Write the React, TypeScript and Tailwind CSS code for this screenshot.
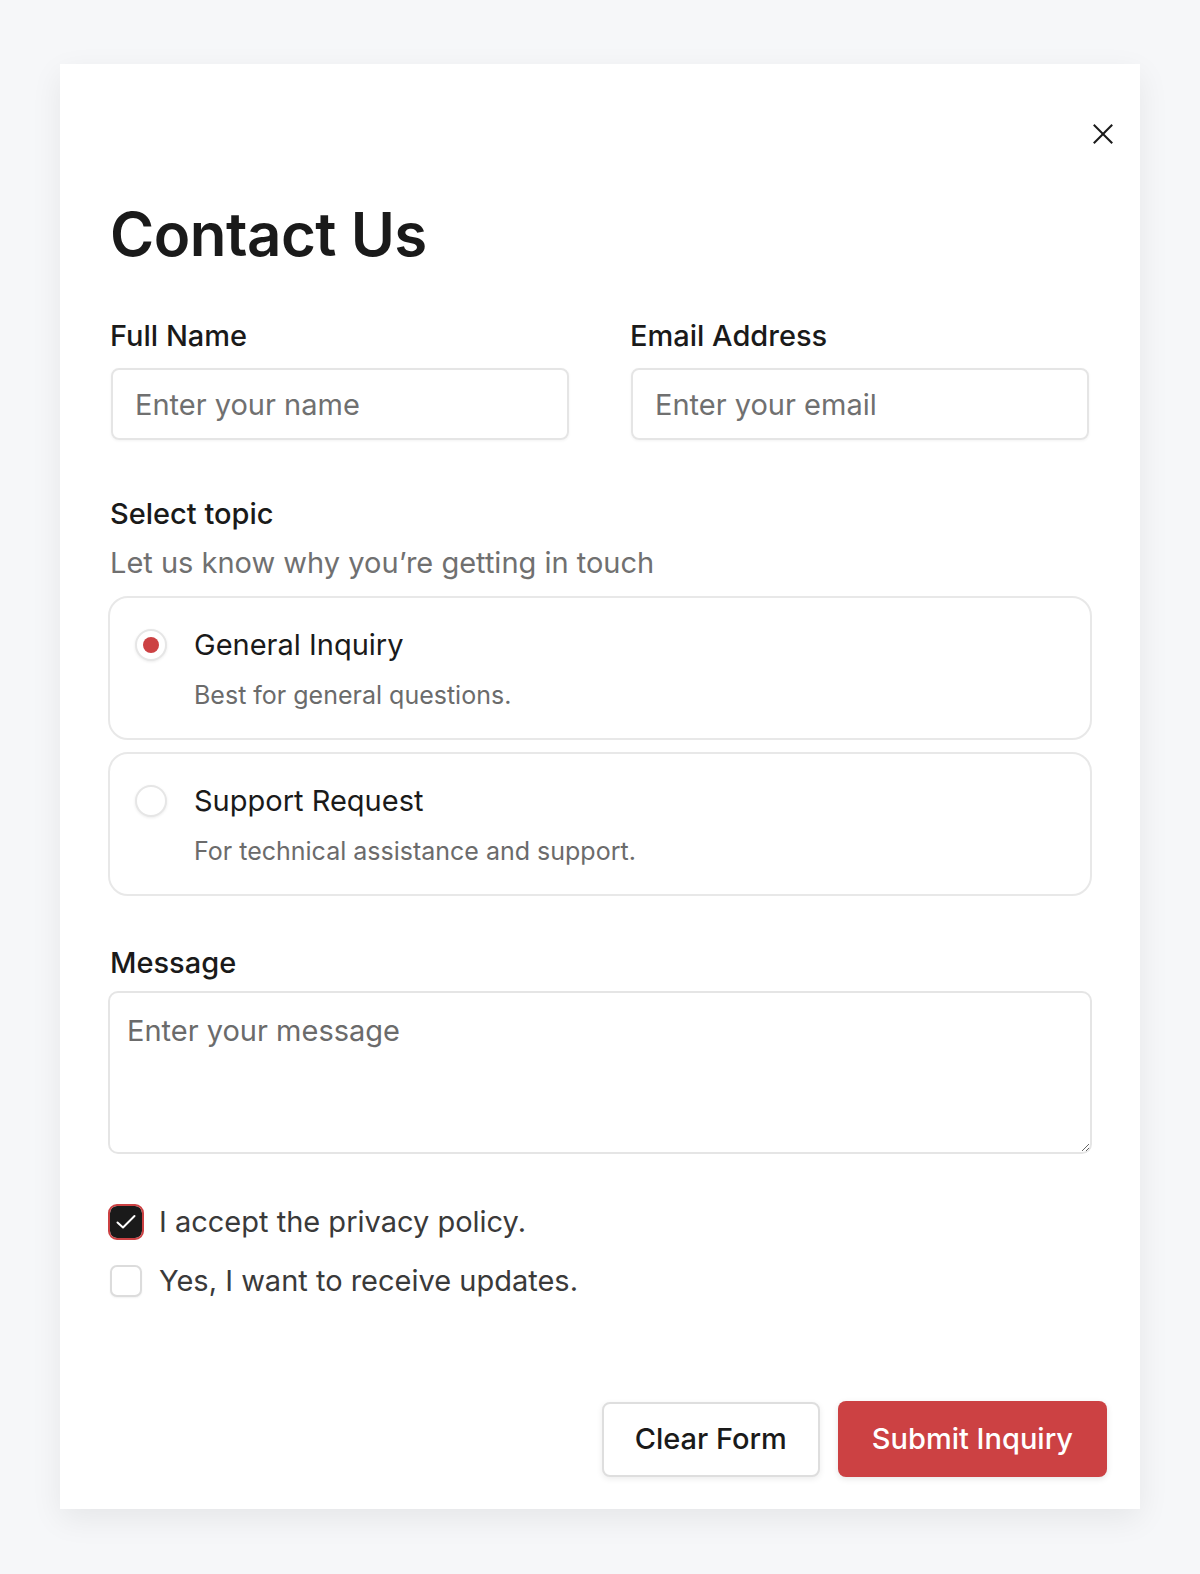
import React, { useState } from 'react';

// Close icon drawn as two strokes
const CloseIcon: React.FC = () => (
  <svg width="20" height="20" viewBox="0 0 20 20" fill="none" stroke="#1a1a1a" strokeWidth="2" strokeLinecap="square">
    <path d="M1.5 1.5 L18.5 18.5" />
    <path d="M18.5 1.5 L1.5 18.5" />
  </svg>
);

const CheckIcon: React.FC = () => (
  <svg width="24" height="24" viewBox="0 0 24 24" fill="none" stroke="#ffffff" strokeWidth="2" strokeLinecap="round" strokeLinejoin="round">
    <path d="M3.5 12.5 L9 17.5 L20.5 6" />
  </svg>
);

const topics = [
  { id: 'general', title: 'General Inquiry', desc: 'Best for general questions.' },
  { id: 'support', title: 'Support Request', desc: 'For technical assistance and support.' },
];

const Checkbox: React.FC<{ checked: boolean; onToggle: () => void; label: string }> = ({ checked, onToggle, label }) => (
  <label className="flex h-[36px] cursor-pointer items-center gap-[15px]" onClick={onToggle}>
    <span className="flex h-[36px] w-[36px] items-center justify-center">
      {checked ? (
        <span className="flex h-[32px] w-[32px] items-center justify-center rounded-[7px] bg-[#1a1a1a] outline-2 outline-[#cc4143]">
          <CheckIcon />
        </span>
      ) : (
        <span className="h-[32px] w-[32px] rounded-[7px] border-2 border-[#dcdcdc] bg-white shadow-[0_1px_2px_rgba(0,0,0,0.06)]" />
      )}
    </span>
    <span className="text-[29px] leading-[36px] text-[#3a3a3a]">{label}</span>
  </label>
);

const App: React.FC = () => {
  const [topic, setTopic] = useState('general');
  const [privacy, setPrivacy] = useState(true);
  const [updates, setUpdates] = useState(false);

  return (
    <div className="min-h-screen bg-[#f6f7f9] px-[60px] pt-[64px] pb-[65px] font-['Inter',sans-serif] text-[#1a1a1a]">
      <div className="relative bg-white shadow-[0_10px_30px_rgba(0,0,0,0.07)]">
        <button className="absolute top-[50px] right-[17px] flex h-[40px] w-[40px] items-center justify-center">
          <CloseIcon />
        </button>

        <div className="px-[48px] pt-[140px]">
          <h1 className="pl-[2px] text-[60px] leading-[60px] font-semibold tracking-[-0.5px]">Contact Us</h1>

          <div className="mt-[56px] grid grid-cols-2 gap-x-[56px]">
            <div>
              <label className="block pl-[2px] text-[29px] leading-[32px] font-medium">Full Name</label>
              <input
                type="text"
                placeholder="Enter your name"
                className="mx-[3px] mt-[16px] block h-[72px] w-[calc(100%-6px)] rounded-[8px] border-2 border-[#e5e5e5] px-[22px] text-[29px] shadow-[0_1px_3px_rgba(0,0,0,0.05)] outline-none placeholder:text-[#707070]"
              />
            </div>
            <div>
              <label className="block pl-[2px] text-[29px] leading-[32px] font-medium">Email Address</label>
              <input
                type="email"
                placeholder="Enter your email"
                className="mx-[3px] mt-[16px] block h-[72px] w-[calc(100%-6px)] rounded-[8px] border-2 border-[#e5e5e5] px-[22px] text-[29px] shadow-[0_1px_3px_rgba(0,0,0,0.05)] outline-none placeholder:text-[#707070]"
              />
            </div>
          </div>

          <div className="mt-[58px] pl-[2px]">
            <p className="text-[29px] leading-[32px] font-medium">Select topic</p>
            <p className="mt-[15px] text-[29px] leading-[36px] text-[#707070]">Let us know why you’re getting in touch</p>
          </div>

          <div className="mt-[15px] flex flex-col gap-[12px]">
            {topics.map((t) => (
              <div
                key={t.id}
                onClick={() => setTopic(t.id)}
                className="cursor-pointer rounded-[20px] border-2 border-[#e8e8e8] pt-[29px] pb-[27px] pl-[25px] pr-[24px]"
              >
                <div className="flex items-center gap-[27px]">
                  <span className="flex h-[32px] w-[32px] items-center justify-center rounded-full border-2 border-[#e6e6e6] bg-white shadow-[0_1px_3px_rgba(0,0,0,0.08)]">
                    {topic === t.id && <span className="h-[16px] w-[16px] rounded-full bg-[#cc4143]" />}
                  </span>
                  <span className="text-[29px] leading-[36px]">{t.title}</span>
                </div>
                <p className="mt-[16px] pl-[59px] text-[25px] leading-[32px] text-[#6b6b6b]">{t.desc}</p>
              </div>
            ))}
          </div>

          <label className="mt-[51px] block pl-[2px] text-[29px] leading-[32px] font-medium">Message</label>
          <textarea
            placeholder="Enter your message"
            className="mt-[12px] block h-[163px] w-full rounded-[10px] border-2 border-[#e5e5e5] px-[17px] pt-[20px] text-[29px] leading-[36px] outline-none placeholder:text-[#6b6b6b]"
          />

          <div className="mt-[50px] flex flex-col gap-[23px]">
            <Checkbox checked={privacy} onToggle={() => setPrivacy(!privacy)} label="I accept the privacy policy." />
            <Checkbox checked={updates} onToggle={() => setUpdates(!updates)} label="Yes, I want to receive updates." />
          </div>
        </div>

        <div className="flex items-center justify-end gap-[18px] pt-[102px] pr-[33px] pb-[32px]">
          <button className="h-[75px] rounded-[8px] border-2 border-[#dedede] bg-white px-[31px] text-[29px] font-medium text-[#1a1a1a] shadow-[0_2px_6px_rgba(0,0,0,0.08)]">
            Clear Form
          </button>
          <button className="h-[76px] rounded-[8px] bg-[#cc4143] px-[34px] text-[29px] font-medium text-white shadow-[0_2px_6px_rgba(0,0,0,0.1)]">
            Submit Inquiry
          </button>
        </div>
      </div>
    </div>
  );
};

export default App;
